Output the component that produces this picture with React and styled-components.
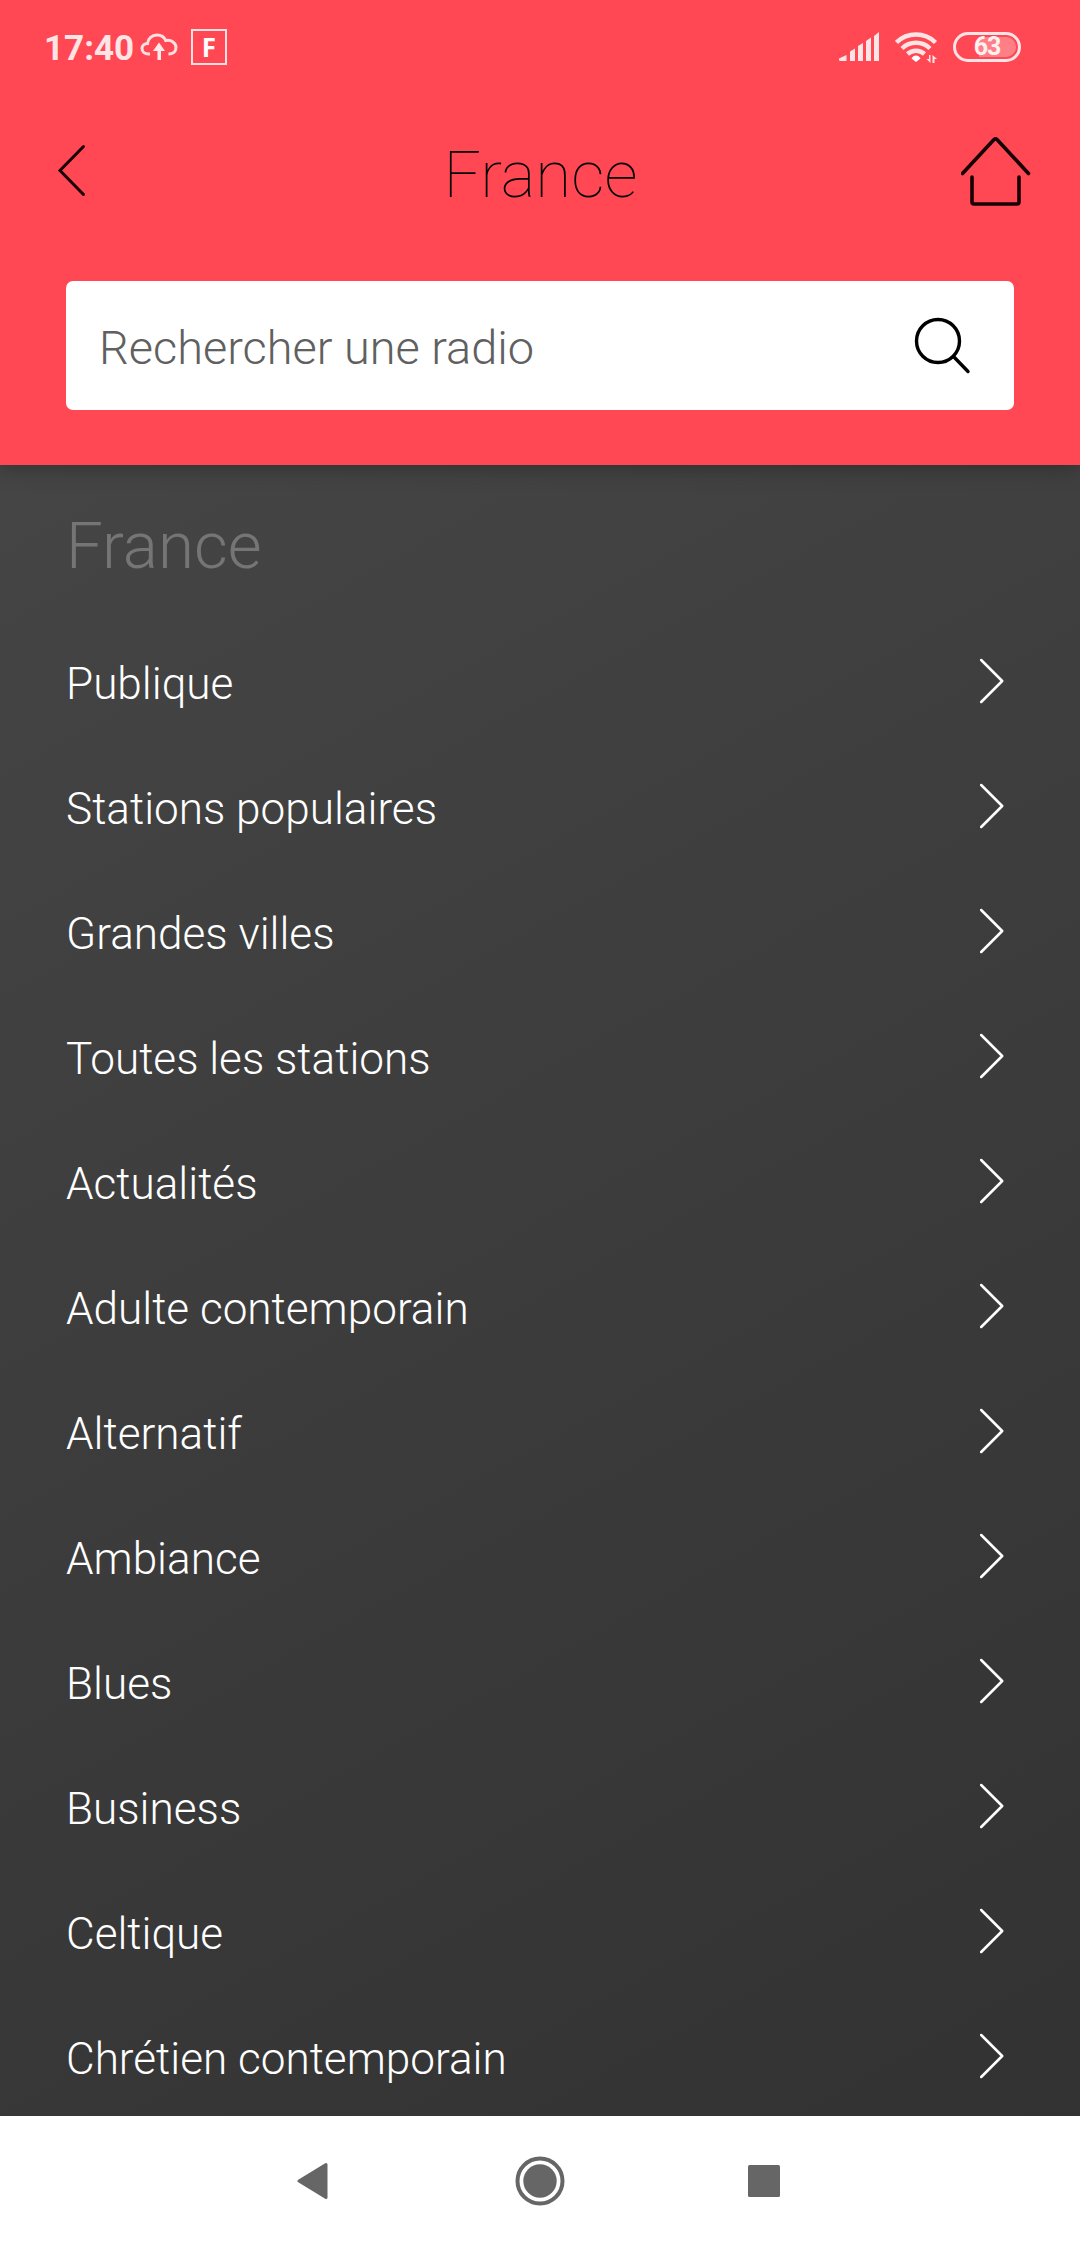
import styled, { createGlobalStyle } from "styled-components";

const GlobalStyle = createGlobalStyle`
  * {
    box-sizing: border-box;
  }
  body {
    margin: 0;
    font-family: Roboto, "Liberation Sans", sans-serif;
  }
`;

const Screen = styled.div`
  display: flex;
  flex-direction: column;
  width: 1080px;
  height: 2246px;
  overflow: hidden;
  background: linear-gradient(151deg, #494949 0%, #313131 100%);
`;

const Header = styled.header`
  display: flex;
  flex-direction: column;
  flex: none;
  height: 465px;
  background: #ff4853;
  box-shadow: 0 3px 20px rgba(0, 0, 0, 0.28);
`;

const StatusBar = styled.div`
  display: flex;
  justify-content: space-between;
  align-items: center;
  height: 94px;
  padding: 0 59px 0 44px;
`;

const StatusGroup = styled.div`
  display: flex;
  align-items: center;
  gap: ${({ $gap }) => $gap}px;
`;

const Clock = styled.span`
  width: 89px;
  padding-top: 3px;
  font-size: 35px;
  font-weight: 700;
  line-height: 40px;
  white-space: nowrap;
  color: #ffe4e6;
`;

const AppBadge = styled.span`
  display: flex;
  align-items: center;
  justify-content: center;
  width: 36px;
  height: 36px;
  margin-left: 6px;
  border: 2px solid #ffdfe1;
  font-family: "Open Sans", sans-serif;
  font-size: 26px;
  font-weight: 700;
  line-height: 32px;
  color: #fff;
`;

const Battery = styled.span`
  display: flex;
  align-items: center;
  justify-content: center;
  width: 68px;
  height: 30px;
  padding: 2px;
  border: 3px solid #ffe4e6;
  border-radius: 15px;
  background: linear-gradient(90deg, transparent 37%, #ff7f87 37%) content-box;
  font-size: 25px;
  font-weight: 700;
  line-height: 22px;
  letter-spacing: -1px;
  color: #fff0f1;
`;

const TitleBar = styled.div`
  display: grid;
  grid-template-columns: 80px 1fr 80px;
  align-items: center;
  height: 160px;
  padding: 0 47px 0 46px;
`;

const IconButton = styled.button`
  display: flex;
  justify-content: ${({ $end }) => ($end ? "flex-end" : "flex-start")};
  padding: 0 0 ${({ $lift }) => $lift}px;
  border: 0;
  background: none;
`;

const Title = styled.h1`
  margin: 0;
  padding: 2px 0 0 2px;
  font-size: 65.5px;
  font-weight: 100;
  line-height: 80px;
  text-align: center;
  color: #000;
`;

const SearchBox = styled.div`
  display: flex;
  justify-content: space-between;
  align-items: center;
  height: 129px;
  margin: 27px 66px 0;
  padding: 0 42px 0 33px;
  border-radius: 7px;
  background: #fff;
`;

const Placeholder = styled.span`
  padding-top: 4px;
  font-size: 46.9px;
  font-weight: 300;
  line-height: 60px;
  color: #606060;
`;

const Content = styled.main`
  flex: 1;
  min-height: 0;
  overflow: hidden;
  padding: 41px 66px 0;
`;

const SectionTitle = styled.h2`
  height: 112px;
  margin: 0;
  font-size: 65.5px;
  font-weight: 300;
  line-height: 80px;
  color: #757575;
`;

const List = styled.ul`
  margin: 0;
  padding: 0;
  list-style: none;
`;

const Row = styled.li`
  display: flex;
  justify-content: space-between;
  align-items: center;
  height: 125px;
  padding-right: 8px;
`;

const RowLabel = styled.span`
  padding-top: 7px;
  font-size: 44.1px;
  font-weight: 300;
  line-height: 60px;
  color: #fff;
`;

const NavBar = styled.nav`
  display: grid;
  grid-template-columns: 1fr 70px 1fr;
  align-items: center;
  flex: none;
  height: 130px;
  padding: 0 297px;
  background: #fff;
`;

const NavItem = styled.span`
  display: flex;
  justify-content: ${({ $align }) => $align};
`;

const categories = [
  "Publique",
  "Stations populaires",
  "Grandes villes",
  "Toutes les stations",
  "Actualités",
  "Adulte contemporain",
  "Alternatif",
  "Ambiance",
  "Blues",
  "Business",
  "Celtique",
  "Chrétien contemporain",
];

const CloudIcon = () => (
  <svg width="38" height="28" viewBox="0 0 38 28" fill="none">
    <path
      d="M10 21H8.500C4.500 21 2 18.500 2 15.500C2 12.500 4.500 10.500 7.500 10.500C8 5.500 12 2 17 2C21 2 24.200 4 25.700 7.500C31.500 6.500 36 10 36 14.500C36 18.500 33 21 28.500 21"
      stroke="#ffdfe1"
      strokeWidth="3"
    />
    <path d="M19 9.500L25 18H21V27H17.500V18H13Z" fill="#ffe9ea" />
  </svg>
);

const SignalIcon = () => (
  <svg width="41" height="30" viewBox="0 0 41 30" fill="#ffe4e6">
    <path d="M0 26.500L7.500 23V29H1.500Q0 29 0 27.500Z" />
    <path d="M11 19.500L16 16.500V29H11Z" />
    <path d="M19 14L24 11V29H19Z" />
    <path d="M27 9L32 5.500V29H27Z" />
    <path d="M35 4L40 0V29H35Z" />
  </svg>
);

const WifiIcon = () => (
  <svg width="43" height="31" viewBox="0 0 43 31" fill="none">
    <g stroke="#ffe4e6" strokeWidth="4.500">
      <path d="M1.500 10.500A28 28 0 0 1 40.500 10.500" />
      <path d="M7 16.500A20 20 0 0 1 35 16.500" />
      <path d="M12.500 22A12.500 12.500 0 0 1 29.500 22" />
    </g>
    <path d="M21 30L16.500 26.500Q18 23.500 21 23.500T25.500 26.500Z" fill="#fff" />
    <path d="M35.500 23V31L31.500 27H34V23ZM37.500 31V23L42 27H39.500V31Z" fill="#ffe4e6" />
  </svg>
);

const BackIcon = () => (
  <svg width="50" height="60" viewBox="0 0 50 60" fill="none">
    <path d="M37.500 6.500L14 30.500L37.500 54.500" stroke="#160003" strokeWidth="3" strokeLinecap="round" />
  </svg>
);

const HomeIcon = () => (
  <svg
    width="72"
    height="72"
    viewBox="0 0 72 72"
    fill="none"
    stroke="#160003"
    strokeWidth="3.6"
    strokeLinecap="round"
    strokeLinejoin="round"
  >
    <path d="M1.500 36.500L33 2.500Q34.500 1 36 2.500L67.500 36.500" />
    <path d="M11 40V65Q11 67 13 67H56Q58 67 58 65V40" />
  </svg>
);

const SearchIcon = () => (
  <svg width="60" height="60" viewBox="0 0 60 60" fill="none" stroke="#000" strokeWidth="3.4">
    <circle cx="26" cy="25" r="21.500" />
    <path d="M41.500 40.500L56 55.500" strokeLinecap="round" />
  </svg>
);

const ChevronIcon = () => (
  <svg width="26" height="48" viewBox="0 0 26 48" fill="none">
    <path
      d="M1.200 3L22.200 24L1.200 45"
      stroke="#fff"
      strokeWidth="2.500"
      strokeLinecap="round"
      strokeLinejoin="round"
    />
  </svg>
);

const App = () => {
  return (
    <>
      <GlobalStyle />
      <Screen>
        <Header>
          <StatusBar>
            <StatusGroup $gap={7}>
              <Clock>17:40</Clock>
              <CloudIcon />
              <AppBadge>F</AppBadge>
            </StatusGroup>
            <StatusGroup $gap={15}>
              <SignalIcon />
              <WifiIcon />
              <Battery>63</Battery>
            </StatusGroup>
          </StatusBar>
          <TitleBar>
            <IconButton aria-label="Retour" $lift={9}>
              <BackIcon />
            </IconButton>
            <Title>France</Title>
            <IconButton aria-label="Accueil" $lift={2} $end>
              <HomeIcon />
            </IconButton>
          </TitleBar>
          <SearchBox>
            <Placeholder>Rechercher une radio</Placeholder>
            <SearchIcon />
          </SearchBox>
        </Header>
        <Content>
          <SectionTitle>France</SectionTitle>
          <List>
            {categories.map((name) => (
              <Row key={name}>
                <RowLabel>{name}</RowLabel>
                <ChevronIcon />
              </Row>
            ))}
          </List>
        </Content>
        <NavBar>
          <NavItem $align="flex-start">
            <svg width="31" height="38" viewBox="0 0 31 38">
              <path
                d="M2 19L29 2.500V35.500Z"
                fill="#666"
                stroke="#666"
                strokeWidth="3"
                strokeLinejoin="round"
              />
            </svg>
          </NavItem>
          <NavItem $align="center">
            <svg width="50" height="50" viewBox="0 0 50 50">
              <circle cx="25" cy="25" r="22.500" fill="none" stroke="#666" strokeWidth="4" />
              <circle cx="25" cy="25" r="16.700" fill="#666" />
            </svg>
          </NavItem>
          <NavItem $align="flex-end">
            <svg width="35" height="32" viewBox="0 0 35 32">
              <rect width="32" height="32" rx="1.500" fill="#666" />
            </svg>
          </NavItem>
        </NavBar>
      </Screen>
    </>
  );
};

export default App;
